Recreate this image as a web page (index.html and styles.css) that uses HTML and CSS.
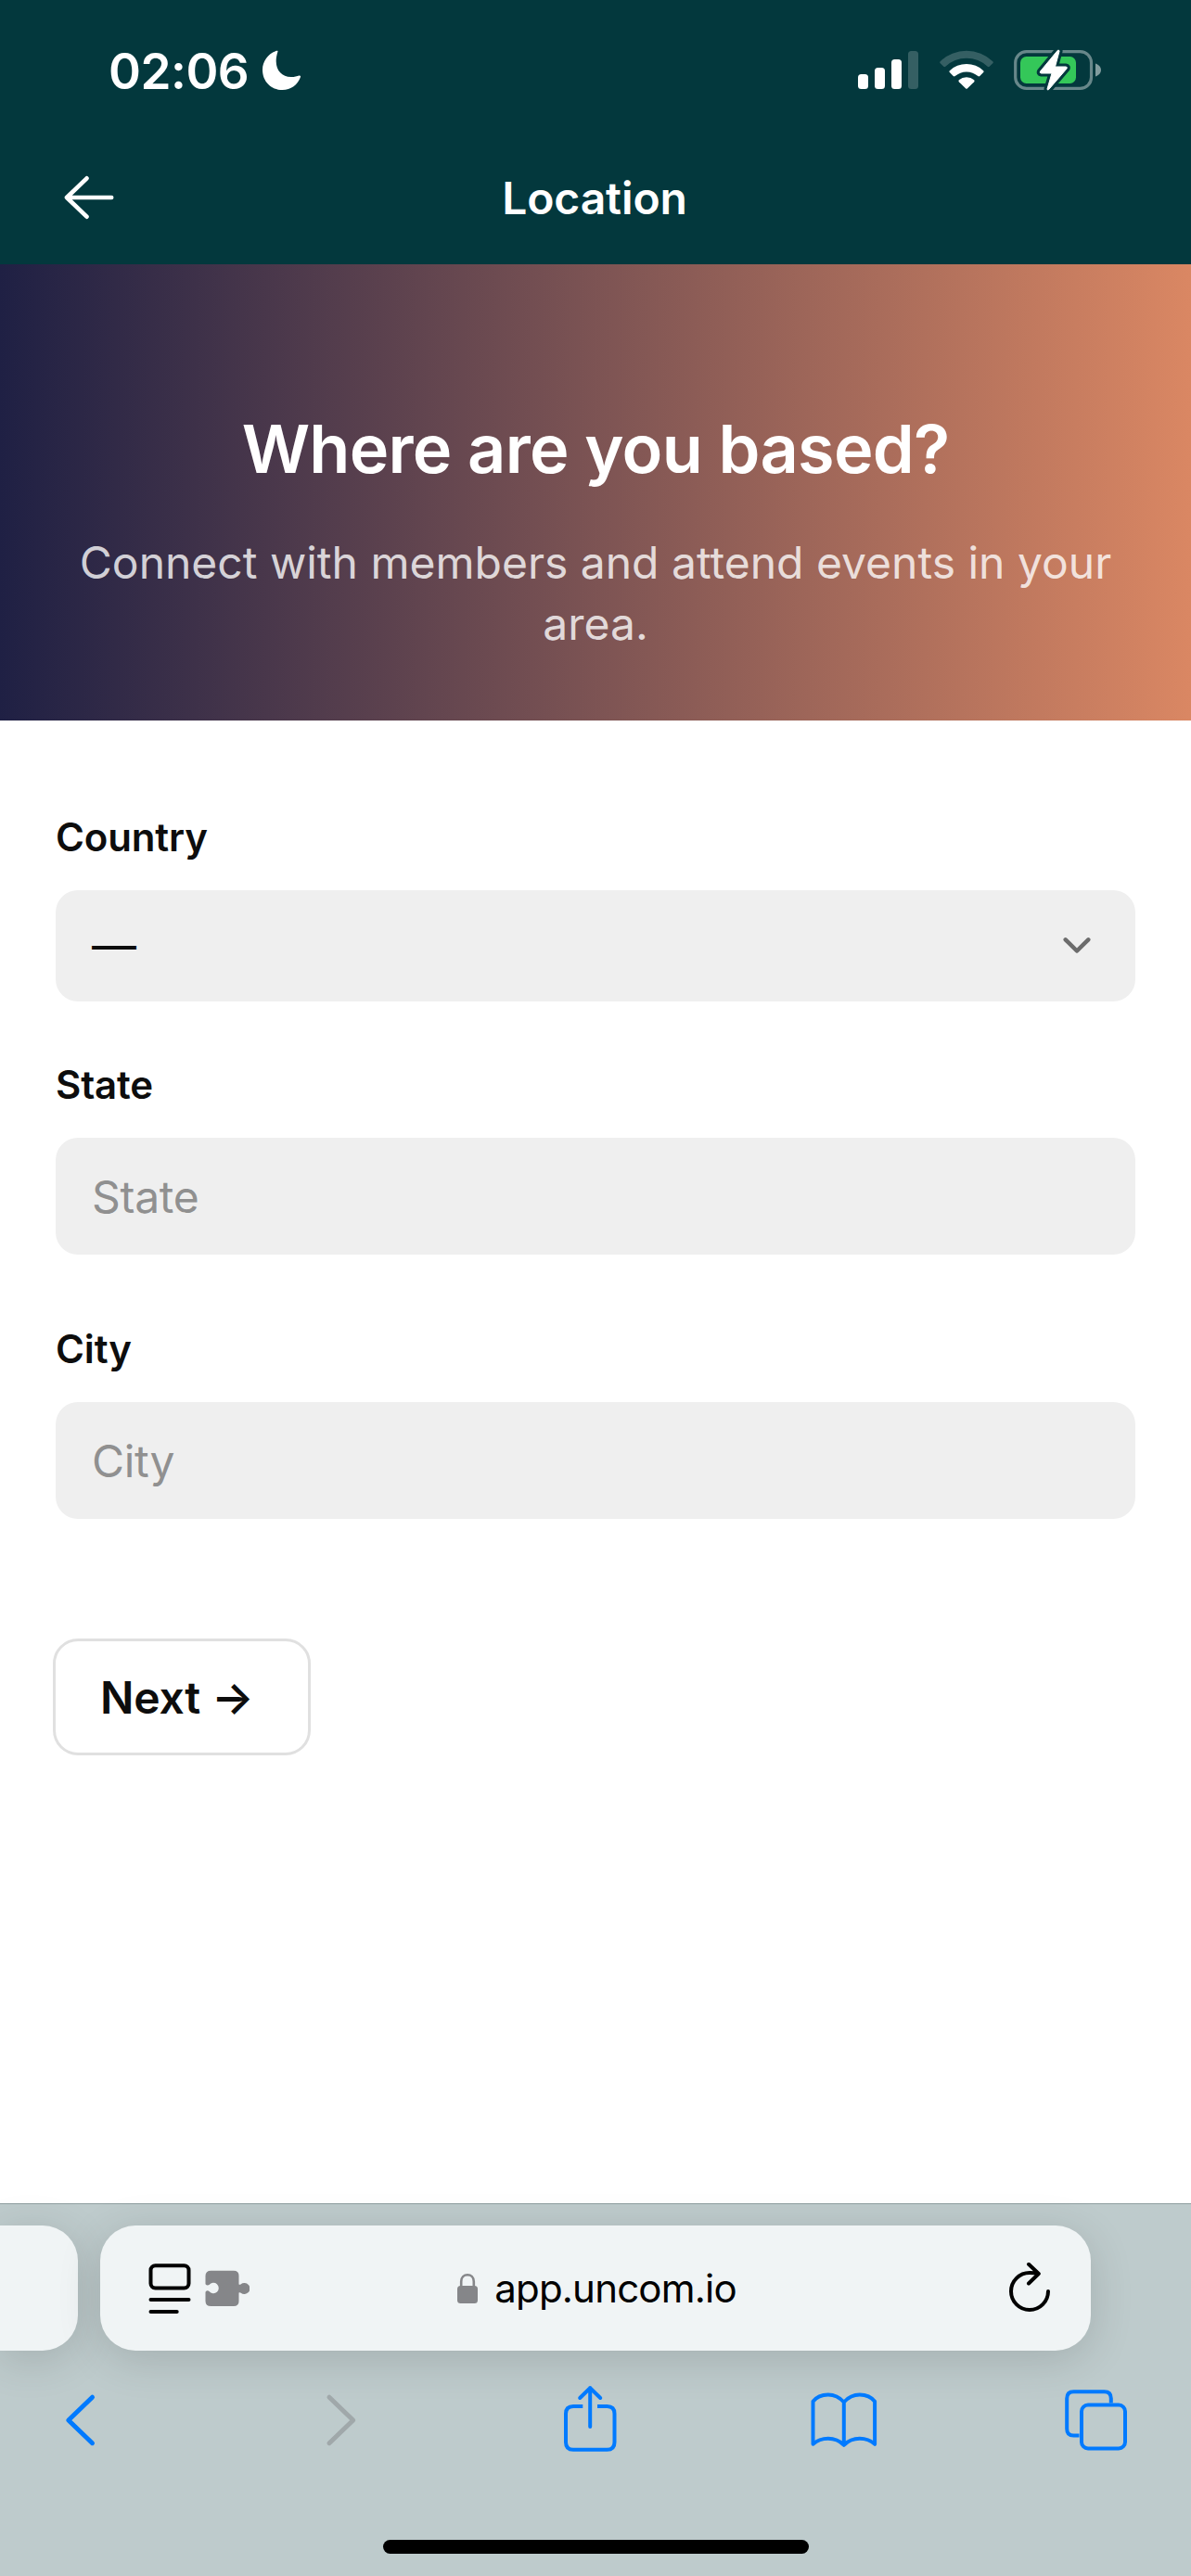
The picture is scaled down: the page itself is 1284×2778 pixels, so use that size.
FILE: index.html
```html
<!DOCTYPE html>
<html lang="en">
<head>
<meta charset="utf-8">
<title>Location</title>
<link rel="stylesheet" href="styles.css">
</head>
<body>
<div class="screen">
  <header class="header">
    <div class="status">
      <span class="time">02:06</span>
      <svg class="moon" width="42" height="44" viewBox="283 55 42 44"><path fill="#fff" d="M299.500 56.300c.2 0-1.800 5-1.800 11 0 10 6.500 16.700 16 16.700 4 0 6.500-.6 8.700-1.500 1.200-.4 2 .4 1.600 1.600C321 92.600 313.500 98 304.500 98 292.200 98 283 88.700 283 76.200c0-9.200 6-17 14-20 1.200-.4 2.500-.5 2.500.1z"/></svg>
      <div class="indicators">
        <svg width="65" height="46" viewBox="925 53 65 46" fill="#fff"><rect x="925" y="80" width="11" height="16" rx="3.500"/><rect x="943" y="73" width="11" height="23" rx="3.500"/><rect x="961" y="64" width="11" height="32" rx="3.500"/><rect x="979" y="55" width="11" height="41" rx="3.500" opacity=".2"/></svg>
        <svg class="wifi" width="58" height="46" viewBox="1012.500 53 58 46" fill="#fff"><path opacity=".2" d="M1013.200 66.200a41 41 0 0 1 56.600 0q1 1 0 2l-3.600 3.500q-1 .9-2 0a33 33 0 0 0-45.400 0q-1 .9-2 0l-3.600-3.500q-1-1 0-2z"/><path d="M1023.300 76.200a26.500 26.500 0 0 1 36.400 0q1 .9 0 1.900l-3.900 4q-1 .8-2 0a18.500 18.500 0 0 0-24.600 0q-1 .8-2 0l-3.900-4q-1-1 0-1.900z"/><path d="M1033.300 86.300a12.500 12.500 0 0 1 16.400 0q.9 1 0 1.900l-7.400 7.300q-.8.700-1.600 0l-7.400-7.300q-.9-.9 0-1.900z"/></svg>
        <svg width="95" height="46" viewBox="1093 53 95 46"><rect x="1094.700" y="55.600" width="81.800" height="39.800" rx="12" fill="none" stroke="#fff" stroke-opacity=".4" stroke-width="3.200"/><path d="M1181 68.500c3.600 1.300 6 4 6 7s-2.400 5.700-6 7z" fill="#fff" fill-opacity=".5"/><rect x="1100" y="61" width="60" height="29" rx="6.500" fill="#34c759"/><path d="M1140.300 54.300 1121.500 77q-.9 1.800 1 2h11.500l-5 17q.2 1.700 1.600.6L1150 74q1-1.800-1-2h-11.500l4.600-17q-.3-1.400-1.800-.700z" fill="#fff" stroke="#03383d" stroke-width="7" stroke-linejoin="round"/><path d="M1140.300 54.300 1121.500 77q-.9 1.800 1 2h11.500l-5 17q.2 1.700 1.600.6L1150 74q1-1.800-1-2h-11.500l4.600-17q-.3-1.400-1.800-.700z" fill="#fff" stroke="#fff" stroke-width="1"/></svg>
      </div>
    </div>
    <nav class="nav">
      <svg width="54" height="48" viewBox="69 189 54 48" fill="none" stroke="#fff" stroke-width="4.600" stroke-linecap="round" stroke-linejoin="round"><path d="M120.200 213H72M93.500 192.300 72 213l21.500 20.700"/></svg>
      <h1 class="nav-title">Location</h1>
    </nav>
  </header>

  <section class="hero">
    <h2 class="hero-title">Where are you based?</h2>
    <p class="hero-text">Connect with members and attend events in your area.</p>
  </section>

  <main class="form">
    <label class="label">Country</label>
    <div class="field select"><span>—</span>
      <svg width="30" height="20" viewBox="1146 1010.500 30 20" fill="none" stroke="#6c6c6c" stroke-width="4.500" stroke-linecap="round" stroke-linejoin="round"><path d="M1148.700 1013.800 1161 1026l12.300-12.200"/></svg>
    </div>
    <label class="label state" for="state">State</label>
    <input class="field" id="state" placeholder="State">
    <label class="label city" for="city">City</label>
    <input class="field" id="city" placeholder="City">
    <button class="next" type="button">Next →</button>
  </main>

  <footer class="toolbar">
    <div class="tabs">
      <div class="tab previous"></div>
      <div class="tab current">
        <div class="page-tools">
          <svg width="46" height="56" viewBox="160.500 2440 46 56" fill="none" stroke="#000" stroke-width="4" stroke-linecap="round"><rect x="163" y="2443.200" width="41" height="24.300" rx="5"/><path d="M163 2480h41M163 2493h28.200"/></svg>
          <svg width="48" height="56" viewBox="222.500 2440 48 56" fill="#858689"><path d="M229 2448.700h24.500q5.500 0 5.500 5.500v9.300q1.300.8 2.200-.2a6 6 0 1 1 0 9.400q-.9-1-2.200-.200v9q0 5.500-5.500 5.500H229q-6 0-6-5.500v-9.800q1.800-2.200 4-.8a5.700 5.700 0 1 0 0-6.800q-2.200 1.300-4-.8v-9q0-5.600 6-5.600z"/></svg>
        </div>
        <div class="address">
          <svg width="22" height="34" viewBox="493 2449 22 34"><rect x="493" y="2463" width="22" height="19" rx="3.500" fill="#858689"/><path d="M497.200 2464v-5.500c0-4.500 3-7.200 6.800-7.200s6.800 2.700 6.800 7.200v5.500" fill="none" stroke="#858689" stroke-width="2.600"/></svg>
          <span>app.uncom.io</span>
        </div>
        <svg class="reload" width="46" height="56" viewBox="1087 2439 46 56" fill="none" stroke="#000" stroke-width="4" stroke-linecap="round" stroke-linejoin="round"><path d="M1130 2470a20 20 0 1 1-20-20q5 0 9.500 1M1109 2440.800l10.800 10.200-10.800 10.500"/></svg>
      </div>
    </div>
    <div class="actions">
      <svg width="72" height="78" viewBox="56 2570 72 78"><path d="M99.500 2585.200 73.800 2610l25.700 24.700" stroke-width="5"/></svg>
      <svg class="disabled" width="72" height="78" viewBox="328.500 2570 72 78"><path d="M354.500 2585.200 380.200 2610l-25.700 24.700" stroke-width="5"/></svg>
      <svg width="72" height="78" viewBox="601 2570 72 78"><path stroke-linecap="butt" d="M628.300 2595H618q-8 0-8 8v30.700q0 8 8 8h36.500q8 0 8-8V2603q0-8-8-8H644"/><path d="M636.200 2617V2575M625.200 2586l11-10.800 11 10.800"/></svg>
      <svg width="72" height="78" viewBox="873.500 2570 72 78"><path d="M909.300 2590.500c-4.500-5-10.500-8-17-8-6.800 0-13 3-16.300 7.300v46c4.500-4 10.500-6 16.300-6 6.500 0 12.500 2.500 17 7 4.500-4.500 10.500-7 17-7 5.800 0 11.800 2 16.300 6v-46c-3.300-4.300-9.500-7.300-16.300-7.300-6.500 0-12.500 3-17 8zm0 0v46.300"/></svg>
      <svg width="72" height="78" viewBox="1146 2570 72 78"><rect x="1166" y="2593.500" width="47" height="47" rx="7"/><path stroke-linecap="butt" d="M1163.500 2626.500H1157.500q-7.300 0-7.300-7.300V2586.500q0-7.300 7.300-7.300h33q7.300 0 7.300 7.300v5"/></svg>
    </div>
    <div class="home-indicator"></div>
  </footer>
</div>
</body>
</html>
```
FILE: styles.css
```css
* { box-sizing: border-box; }

body {
  margin: 0;
  background: #fff;
  color: #0d0d0d;
  font-family: Inter, "Liberation Sans", sans-serif;
}

svg { display: block; flex: none; }

.screen {
  display: flex;
  flex-direction: column;
  width: 1284px;
  height: 2778px;
  overflow: hidden;
}

.header {
  flex: none;
  height: 285px;
  background: #03383d;
  color: #fff;
}

.status {
  display: flex;
  align-items: center;
  height: 152px;
  padding: 0 96px 0 117px;
}

.time {
  width: 166px;
  padding-top: 2px;
  font-size: 53px;
  font-weight: 600;
  letter-spacing: -.5px;
  line-height: 64px;
  white-space: nowrap;
}

.indicators {
  display: flex;
  gap: 22.500px;
  margin-left: auto;
}

.nav {
  display: grid;
  grid-template-columns: 54px 1fr 54px;
  align-items: center;
  height: 122px;
  padding: 0 69px;
}

.nav-title {
  margin: 0;
  padding: 2px 2px 0 0;
  font-size: 48px;
  font-weight: 600;
  letter-spacing: -.1px;
  line-height: 60px;
  text-align: center;
}

.hero {
  flex: none;
  height: 492px;
  padding: 154px 60px 0;
  background: linear-gradient(90deg, #1f2044, #da8763);
  color: #fff;
  text-align: center;
}

.hero-title {
  margin: 0 0 45px;
  font-size: 72px;
  font-weight: 600;
  letter-spacing: -.72px;
  line-height: 90px;
}

.hero-text {
  margin: 0;
  color: rgba(255, 255, 255, .8);
  font-size: 48px;
  line-height: 66px;
}

.form {
  display: flex;
  flex: 1;
  flex-direction: column;
  padding: 96px 60px 0;
}

.label {
  margin-bottom: 27px;
  font-size: 42px;
  font-weight: 600;
  letter-spacing: -.15px;
  line-height: 60px;
}

.label.state { margin-top: 60px; }
.label.city { margin-top: 72px; }

.field {
  flex: none;
  height: 126px;
  padding: 0 39px;
  border: 0;
  border-radius: 24px;
  background: #efefef;
  color: #0d0d0d;
  font: 400 48px/60px Inter, "Liberation Sans", sans-serif;
  letter-spacing: -.3px;
}

.field::placeholder { color: #909090; opacity: 1; }

.select {
  display: flex;
  align-items: center;
  justify-content: space-between;
  height: 120px;
  padding-right: 48px;
}

.next {
  align-self: flex-start;
  width: 278px;
  height: 126px;
  margin: 129px 0 0 -3px;
  padding: 1px 0 0 48px;
  border: 3px solid #e0e0e0;
  border-radius: 27px;
  background: #fff;
  color: #0d0d0d;
  font: 600 48px/60px Inter, "Liberation Sans", sans-serif;
  letter-spacing: -.2px;
  text-align: left;
  white-space: nowrap;
}

.toolbar {
  flex: none;
  height: 402px;
  border-top: 1px solid #8f9fa1;
  padding-top: 23px;
  background: #becbcc;
}

.tabs {
  display: flex;
  gap: 24px;
}

.tab {
  height: 135px;
  background: #f0f4f5;
  box-shadow: 0 9px 48px rgba(0, 0, 0, .14);
}

.previous {
  width: 84px;
  border-radius: 0 38px 38px 0;
}

.current {
  display: grid;
  grid-template-columns: 1fr auto 1fr;
  align-items: center;
  width: 1068px;
  border-radius: 38px;
}

.page-tools {
  display: flex;
  gap: 15px;
  padding-left: 52px;
}

.address {
  display: flex;
  align-items: center;
  gap: 18px;
  padding-left: 3px;
  color: #000;
  font-size: 42px;
  letter-spacing: -.8px;
  line-height: 54px;
}

.reload {
  justify-self: end;
  margin-right: 43px;
}

.actions {
  display: flex;
  justify-content: space-between;
  padding: 35px 66px 0 56px;
}

.actions svg {
  fill: none;
  stroke: #007aff;
  stroke-width: 4;
  stroke-linecap: round;
  stroke-linejoin: round;
}

.actions .disabled { stroke: #a0a8aa; }

.home-indicator {
  width: 459px;
  height: 15px;
  margin: 91px auto 0;
  border-radius: 8px;
  background: #000;
}
```
